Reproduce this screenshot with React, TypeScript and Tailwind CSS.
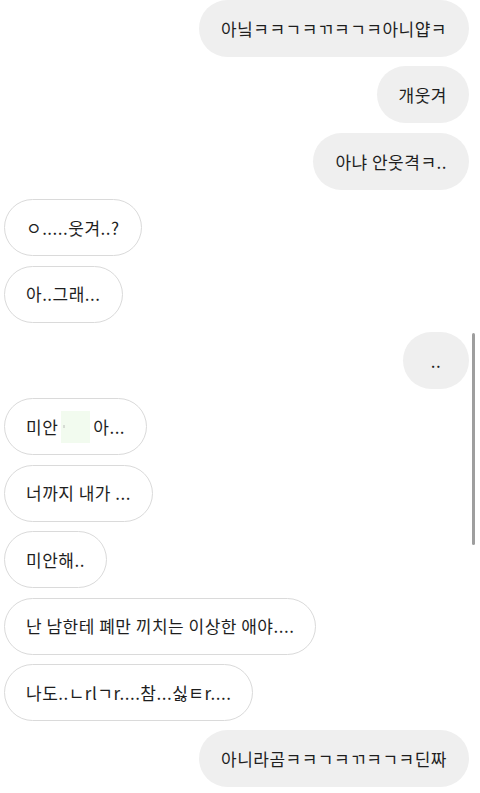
const messages: { me: boolean; text: React.ReactNode; key: string }[] = [
  { key: "1", me: true, text: "아닠ㅋㅋㄱㅋㄲㅋㄱㅋ아니얍ㅋ" },
  { key: "2", me: true, text: "개웃겨" },
  { key: "3", me: true, text: "아냐 안웃격ㅋ.." },
  { key: "4", me: false, text: "ㅇ.....웃겨..?" },
  { key: "5", me: false, text: "아..그래..." },
  { key: "6", me: true, text: ".." },
  {
    key: "7",
    me: false,
    text: (
      <>
        미안{" "}
        <span className="mx-[3px] inline-flex h-[32px] w-[29px] items-center justify-start bg-[#f2fbef] align-middle">
          <span className="ml-[2px] h-[3px] w-[2px] bg-[#d6dcd4]" />
        </span>{" "}
        아...
      </>
    ),
  },
  { key: "8", me: false, text: "너까지 내가 ..." },
  { key: "9", me: false, text: "미안해.." },
  { key: "10", me: false, text: "난 남한테 폐만 끼치는 이상한 애야...." },
  { key: "11", me: false, text: "나도..ㄴrlㄱr....참...싫ㅌr...." },
  { key: "12", me: true, text: "아니라곰ㅋㅋㄱㅋㄲㅋㄱㅋ딘짜" },
];

export default function App() {
  return (
    <div
      className="relative h-[793px] w-[480px] overflow-hidden bg-white"
      style={{ fontFamily: '"Noto Sans CJK KR", "Noto Sans", sans-serif' }}
    >
      <div className="flex flex-col gap-[9.4px] pr-[11px] pl-[4px]">
        {messages.map((m) => (
          <div key={m.key} className={m.me ? "flex justify-end" : "flex justify-start"}>
            <div
              className={
                m.me
                  ? "flex h-[57px] min-w-[66px] items-center justify-center rounded-full bg-[#efefef] px-[22px] text-[17px] tracking-[0.5px] whitespace-nowrap text-[#1e1e1e]"
                  : "flex h-[57px] min-w-[66px] items-center justify-center rounded-full border border-[#dadada] bg-white px-[21px] text-[17px] tracking-[0.5px] whitespace-nowrap text-[#1e1e1e]"
              }
            >
              {m.text}
            </div>
          </div>
        ))}
      </div>
      <div className="absolute top-[333px] right-[5px] h-[212px] w-[3px] rounded-full bg-[#9e9e9e]" />
    </div>
  );
}
